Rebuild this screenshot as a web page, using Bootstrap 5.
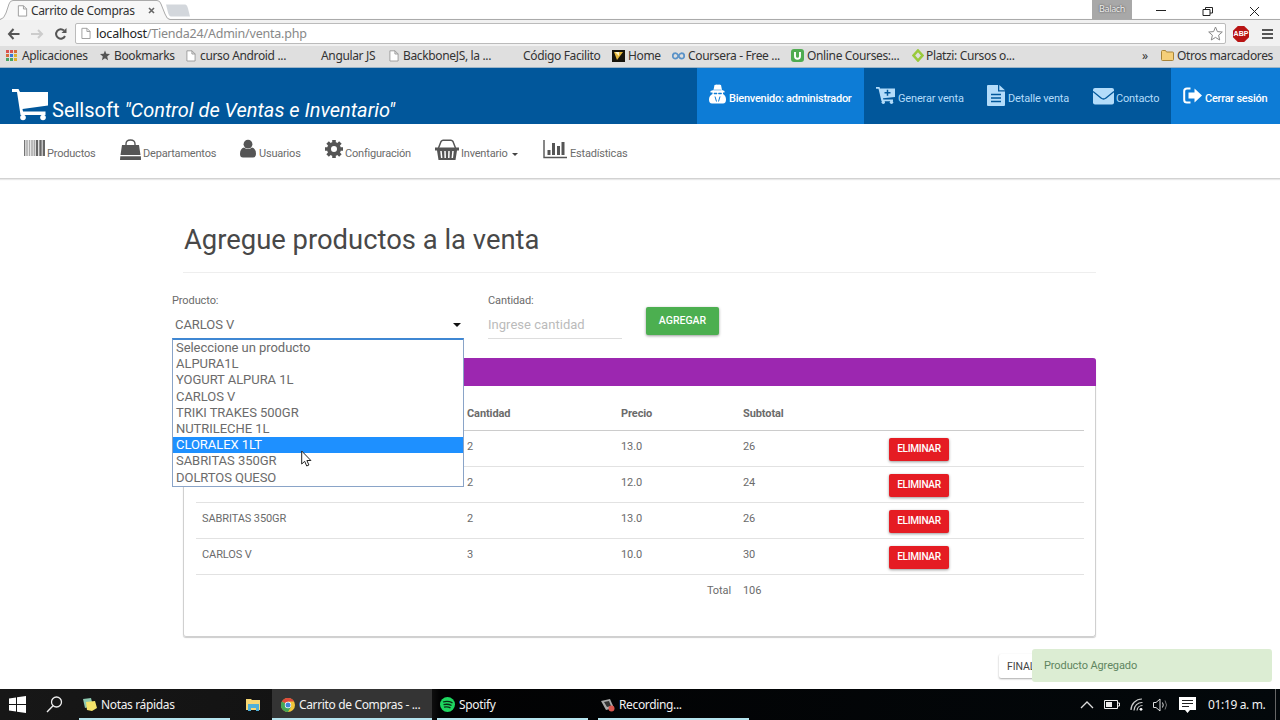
<!DOCTYPE html>
<html lang="es">
<head>
  <meta charset="UTF-8" />
  <meta name="viewport" content="width=device-width, initial-scale=1.0"/>
  <title>Carrito de Compras</title>
  <link href="https://cdn.jsdelivr.net/npm/bootstrap@5.3.3/dist/css/bootstrap.min.css" rel="stylesheet">
  <style>
    body { width: 1280px; height: 720px; overflow: hidden; font-family: Roboto, sans-serif; font-size: 11px; line-height: 16px; letter-spacing: -.1px; color: #6b6b6b; background: #fff; }
    svg { display: block; flex: none; }
    .sys { font-family: "Noto Sans", sans-serif; font-size: 12px; letter-spacing: -.35px; color: #333; white-space: nowrap; }

    /* browser */
    .tabs { height: 20px; background: linear-gradient(#fff 18px, #fcfcfc 18px); border-bottom: 1px solid #aaa; }
    .tab-shape { left: 0; top: 0; }
    .tab-label { width: 190px; padding-left: 17px; padding-top: 1px; height: 20px; }
    .user-tag { width: 40px; height: 19px; background: #a8a8a8; color: #eee; font-size: 9px; line-height: 18px; text-shadow: 0 0 2px #333; margin-right: 24px; }
    .addr-row { height: 26px; background: #f1f1f1; padding-left: 7px; }
    .addr { width: 1151px; height: 21px; border: 1px solid #bbb; border-radius: 2px; background: #fff; padding: 0 5px; font-size: 12.5px; letter-spacing: -.22px; color: #888; }
    .addr > span { padding: 2px 0 0 1px; }
    .addr b { font-weight: 400; color: #222; }
    .abp { width: 16px; height: 16px; background: #b81414; clip-path: polygon(30% 0,70% 0,100% 30%,100% 70%,70% 100%,30% 100%,0 70%,0 30%); color: #fff; font: bold 7px/16px "Liberation Sans", sans-serif; text-align: center; letter-spacing: 0; }
    .bookmarks { display: grid; grid-template-columns: 94px 86px 121px 82px 120px 103px 60px 119px 121px 230px 19px 1fr; height: 22px; background: #dfdfdf; padding-left: 6px; border-bottom: 1px solid #9cb4c8; }
    .bookmarks > div { display: flex; align-items: center; padding-bottom: 2px; }
    .slot { width: 16px; flex: none; }
    .slot.tight { width: 14px; }

    /* site header */
    .top-bar { height: 56px; background: #01579b; color: #fff; }
    .brand { font-size: 20px; line-height: 24px; letter-spacing: 0; padding-top: 21px; padding-left: 12px; }
    .top-link { display: flex; padding-left: 12px; height: 56px; color: #b3dcfa; letter-spacing: -.17px; }
    .top-link span { padding-top: 23px; white-space: nowrap; }
    .top-link.hot { background: #0d7cd6; color: #fff; font-weight: 500; letter-spacing: -.25px; }
    .w-user { width: 167px; }
    .w-new { width: 111px; }
    .w-detail { width: 106px; }
    .w-mail { width: 90px; }
    .w-exit { width: 109px; }
    .main-menu { display: grid; grid-template-columns: 96px 120px 85px 111px 107px 120px; height: 55px; border-bottom: 1px solid #d2d2d2; box-shadow: 0 1px 1px #e8e8e8; padding-left: 24px; }
    .main-menu a { display: flex; color: #6b6b6b; text-decoration: none; letter-spacing: -.2px; white-space: nowrap; }
    .main-menu a span { padding-top: 22px; }
    .main-menu svg { margin-top: 15px; color: #555; }
    .tri { border: 3px solid transparent; border-top-color: #444; border-bottom: 0; }

    /* sale form */
    .sale { width: 913px; margin-left: 183px; }
    .sale h1 { font-size: 27.4px; line-height: 34px; letter-spacing: 0; font-weight: 400; color: #484848; margin: 0; padding: 44px 0 15px 1px; border-bottom: 1px solid #eee; }
    .sale-form { height: 85px; margin-left: -11px; padding-top: 20px; }
    .field-text { height: 30px; font-size: 13px; padding: 8px 2px 0 3px; letter-spacing: -.05px; }
    .field-text .tri { border-width: 4px 4px 0; border-top-color: #111; height: 4px; margin-top: 6px; }
    .f-product { width: 291px; margin-right: 25px; }
    .f-amount { width: 134px; margin-right: 24px; }
    .f-amount .field-text { border-bottom: 1px solid #ddd; padding-left: 0; color: #bbb; letter-spacing: .03px; }
    .options { top: 45px; left: 0; width: 292px; height: 149px; z-index: 5; background: #fff; border: 1px solid #8aa4c8; border-top: 2px solid #3f87d3; font-size: 13px; line-height: 16.2px; letter-spacing: -.05px; }
    .options li { padding-left: 3px; height: 16.2px; }
    .options li.active { background: #1e90ff; color: #fff; }
    .pointer { left: 129px; top: 157px; z-index: 6; }
    .btn-flat { font-size: 10.5px; font-weight: 500; color: #fff; border: 0; border-radius: 2px; padding: 0; text-transform: uppercase; box-shadow: 0 1px 3px rgba(0,0,0,.4); }
    .btn-add { width: 73px; height: 28px; margin-top: 14px; background: #4caf50; }
    .btn-del { width: 60px; height: 23px; background: #e51c23; margin-top: 1px; font-size: 10.1px; letter-spacing: -.3px; display: block; }

    /* sale table */
    .sale-panel { height: 279px; border: 1px solid #d0d0d0; border-top: 0; border-radius: 3px; box-shadow: 0 1px 1px #ccc; }
    .panel-top { height: 28px; background: #9c27b0; margin: 0 -1px; border-radius: 3px 3px 0 0; }
    .items { width: 888px; margin: 11px 0 0 12px; table-layout: fixed; --bs-table-bg: transparent; }
    .items > :not(caption) > * > * { padding: 6px; height: 36px; border-color: #e2e2e2; color: #6b6b6b; vertical-align: top; }
    .items > thead > tr > th { height: 33px; padding: 9px 6px 0; border-bottom: 1px solid #ccc; font-weight: 700; line-height: 16px; }
    .items > tbody > tr > td { padding-top: 8.5px; padding-bottom: 0; }
    .items > tfoot > tr > td { border: 0; padding-top: 8.5px; }
    .items > tbody > tr > td.act { padding-top: 6px; }
    .finish { width: 90px; height: 24px; margin: 17px 0 0 999px; padding-left: 8px; line-height: 25px; font-size: 10.5px; color: #444; box-shadow: 0 1px 2px #aaa; border-radius: 2px; }
    .notice { left: 1032px; top: 649px; width: 240px; height: 33px; background: #dcedd3; border-radius: 3px; color: #5f8560; padding: 8.5px 12px; }

    /* taskbar */
    .task-bar { top: 689px; left: 0; width: 1280px; height: 31px; background: linear-gradient(90deg, #171717, #111 430px, #020203 440px, #03080b); padding-left: 9px; }
    .task-bar, .task-bar .sys { color: #f2f2f2; }
    .task { height: 31px; border-bottom: 2px solid #b5e4ee; padding: 2px 0 0 3px; }
    .task svg { margin-right: 4px; }
    .t-notes { width: 151px; margin-left: 16px; }
    .t-chrome { width: 160px; background: #343434; padding-left: 9px; margin-right: 5px; }
    .t-spotify { width: 151px; margin-right: 10px; }
    .t-rec { width: 151px; }
    .tray { width: 196px; gap: 10px; border-right: 1px solid #666; margin-right: 4px; }
  </style>
</head>
<body>

<!-- icon shapes used more than once -->
<svg width="0" height="0" class="position-absolute">
  <symbol id="page" viewBox="0 0 11 13"><path d="M1 .8h5.600L10 4.200V12H1z M6.500.8v3.500H10" fill="#fff" stroke="#999"/></symbol>
</svg>

<!-- Browser window -->
<div class="sys">
  <div class="tabs d-flex position-relative">
    <svg class="tab-shape position-absolute" width="192" height="20"><path d="M0 19.500Q4 19 6 13L9 4Q10 .5 13 .5H157Q160 .5 161 4L165 14Q167 19.500 170 19.500V20H0z" fill="#f7f7f7"/><path d="M0 19.500Q4 19 6 13L9 4Q10 .5 13 .5H157Q160 .5 161 4L165 14Q167 19.500 170 19.500" fill="none" stroke="#aaa"/><path d="M166 4.500h19q2 0 3 4l2 8h-19q-2 0-3-4z" fill="#d3d7dc"/></svg>
    <div class="tab-label d-flex align-items-center position-relative">
      <svg width="11" height="12" style="margin-right:3px"><use href="#page"/></svg>
      <span>Carrito de Compras</span>
      <svg width="7" height="7" class="ms-auto" style="margin-right:35px"><path d="M1 1l5 5M6 1L1 6" stroke="#666" stroke-width="1.600"/></svg>
    </div>
    <div class="user-tag ms-auto text-center">Balach</div>
    <svg width="124" height="20"><path d="M0 10.500h10M47 9.500h7v6h-7zM49.500 9V7.500h7V13H54M94 7l9 9M103 7l-9 9" fill="none" stroke="#222"/></svg>
  </div>
  <div class="addr-row d-flex align-items-center">
    <svg width="68" height="20"><path d="M12.500 11H2M6.500 6L2 11l4.500 5" fill="none" stroke="#555" stroke-width="2"/><path d="M24 11h11M31 7l4 4-4 4" fill="none" stroke="#ccc" stroke-width="2"/><path d="M57 7.500A4.700 4.700 0 1 0 58 13" fill="none" stroke="#555" stroke-width="2"/><path d="M59.500 5v5h-5z" fill="#555"/></svg>
    <div class="addr d-flex align-items-center">
      <svg width="10" height="13" class="me-1"><use href="#page"/></svg>
      <span><b>localhost</b>/Tienda24/Admin/venta.php</span>
      <svg width="15" height="15" class="ms-auto" style="margin-right:-3px"><path d="M7.500 1l1.900 4.600 4.900.4-3.700 3.200 1.100 4.800-4.200-2.600L3.300 14l1.100-4.800L.7 6l4.900-.4z" fill="none" stroke="#888"/></svg>
    </div>
    <div class="abp" style="margin:2px 0 0 7px">ABP</div>
    <svg width="11" height="12" style="margin:2px 0 0 13px"><path d="M0 2h11M0 6h11M0 10h11" stroke="#555" stroke-width="2"/></svg>
  </div>
  <div class="bookmarks">
    <div><span class="slot"><svg width="11" height="11"><path d="M0 1.500h3M4 1.500h3" stroke="#d9534f" stroke-width="3"/><path d="M8 1.500h3M0 5.500h3" stroke="#d66b3a" stroke-width="3"/><path d="M4 5.500h3" stroke="#3b78d8" stroke-width="3"/><path d="M8 5.500h3M8 9.500h3" stroke="#e0b030" stroke-width="3"/><path d="M0 9.500h3M4 9.500h3" stroke="#4aa564" stroke-width="3"/><path d="M3.500 0v11M7.500 0v11M0 3.500h11M0 7.500h11" stroke="#dfdfdf"/></svg></span>Aplicaciones</div>
    <div><span class="slot tight"><svg width="10" height="11"><path d="M5 .5l1.300 3.300 3.700.3L7.200 6.500l.9 3.700L5 8.200l-3.100 2 .9-3.700L0 4.100l3.700-.3z" fill="#555"/></svg></span>Bookmarks</div>
    <div><span class="slot tight"><svg width="10" height="12"><use href="#page"/></svg></span>curso Android ...</div>
    <div><span class="slot tight"></span>Angular JS</div>
    <div><span class="slot tight"><svg width="10" height="12"><use href="#page"/></svg></span>BackboneJS, la ...</div>
    <div><span class="slot tight"></span>Código Facilito</div>
    <div><span class="slot"><svg width="13" height="12"><path d="M0 0h13v12H0z" fill="#16140c"/><path d="M2 2h9L5 10z" fill="#e6b93c"/><path d="M3 2h4v4z" fill="#fff3c4"/></svg></span>Home</div>
    <div><span class="slot"><svg width="13" height="8"><path d="M6.500 4Q5 1.200 3.500 1.200a2.700 2.700 0 0 0 0 5.500Q5 6.700 6.500 4t3-2.800a2.700 2.700 0 0 1 0 5.500Q8 6.700 6.500 4z" fill="none" stroke="#5b93c8" stroke-width="1.800"/></svg></span>Coursera - Free ...</div>
    <div><span class="slot"><svg width="13" height="13"><rect width="13" height="13" rx="3" fill="#4fab50"/><path d="M4 3v4.200a2.500 2.500 0 0 0 5 0V3" fill="none" stroke="#fff" stroke-width="1.900"/></svg></span>Online Courses:...</div>
    <div><span class="slot tight"><svg width="12" height="13"><path d="M6 1.500L10.500 6.500 6 11.500 1.500 6.500z" fill="none" stroke="#9aca3c" stroke-width="2.600"/></svg></span>Platzi: Cursos o...</div>
    <div>»</div>
    <div><span class="slot"><svg width="13" height="11"><path d="M.5 1.500q0-1 1-1h3l1 1.500h6q1 0 1 1v6.500q0 1-1 1h-10q-1 0-1-1z" fill="#f5cf79" stroke="#a88438"/></svg></span>Otros marcadores</div>
  </div>
</div>

<!-- Site header -->
<div class="top-bar d-flex">
  <div class="brand d-flex me-auto">
    <svg width="37" height="32"><path d="M0 0h6.500L8 3h28v13.500L10.500 20l.5 2.500h22.500V26H8.500L5 3H0z" fill="#fff"/><circle cx="11" cy="28.500" r="2.800" fill="#fff"/><circle cx="31" cy="28.500" r="2.800" fill="#fff"/></svg>
    <div style="padding:9px 0 0 3px">Sellsoft <em>"Control de Ventas e Inventario"</em></div>
  </div>
  <div class="top-link hot w-user">
    <svg width="20" height="36" viewBox="0 -16 20 36"><path d="M4.500 6L5.500 1Q8 0 9 .8 10 0 12 1l1 5 2.500 1v1.500H14V10q3 1.500 3 5.500 0 4-3 4H3q-3 0-3-4Q0 11.500 3.500 10V8.500H1.500V7z" fill="#fff"/><path d="M4.500 6h8M5 9h3v1H5zM9.500 9h3v1h-3z" stroke="#0d7cd6" fill="#0d7cd6" stroke-width=".5"/><path d="M6 12.500l1.500 5M11 12.500l-1.500 5" stroke="#0d7cd6"/></svg>
    <span>Bienvenido: administrador</span>
  </div>
  <div class="top-link w-new">
    <svg width="22" height="36" viewBox="0 -18 22 36"><path d="M0 1h3.500l.5 1.500h15V11L7 12.300l.3 1.200H17v1.800H5.500L2.500 2.800H0z" fill="currentColor"/><circle cx="7.300" cy="16.300" r="1.700" fill="currentColor"/><circle cx="15.500" cy="16.300" r="1.700" fill="currentColor"/><path d="M11.500 3.800v6M8.500 6.800h6" stroke="#01579b" stroke-width="1.500"/></svg>
    <span>Generar venta</span>
  </div>
  <div class="top-link w-detail">
    <svg width="21" height="39" viewBox="0 -17 21 39"><path d="M1 0h10v6.500h7V20q0 1-1 1H1q-1 0-1-1V1q0-1 1-1zM12.300 0L18 5.300h-5.700z" fill="currentColor"/><path d="M4 9.500h10M4 13h10M4 16.500h10" stroke="#01579b" stroke-width="1.400"/></svg>
    <span>Detalle venta</span>
  </div>
  <div class="top-link w-mail">
    <svg width="23" height="37" viewBox="0 -19 23 37"><rect x="0" y="1" width="21" height="16.500" rx="2" fill="currentColor"/><path d="M0 4.500l8 6.500q2.500 2 5 0l8-6.500" fill="none" stroke="#01579b" stroke-width="1.300"/></svg>
    <span>Contacto</span>
  </div>
  <div class="top-link hot w-exit">
    <svg width="22" height="37" viewBox="0 -19 22 37"><path d="M7.500 1.500H4Q1.200 1.500 1.200 4v9q0 2.500 2.800 2.500h3.500" fill="none" stroke="#fff" stroke-width="2"/><path d="M5.500 5.500h6V1.500l7.500 7-7.500 7v-4h-6z" fill="#fff"/></svg>
    <span>Cerrar sesión</span>
  </div>
</div>

<!-- Admin menu -->
<div class="main-menu">
  <a href="#"><svg width="23" height="18"><path d="M3 1v16M5.500 1v16M8 1v16M10.300 1v16" stroke="#aaa" stroke-width="1.600"/><path d="M.7 1v16" stroke="#666" stroke-width="1.200"/><path d="M13 1v16M16.500 1v16M19.800 1v16" stroke="#666" stroke-width="2.400"/></svg><span>Productos</span></a>
  <a href="#"><svg width="23" height="22"><path d="M2 6h17l1.500 10H.5zM.3 17.200h20.600L21 21H0z" fill="currentColor"/><path d="M6 9V5q0-4 4.500-4T15 5v4" fill="none" stroke="currentColor" stroke-width="1.400"/></svg><span>Departamentos</span></a>
  <a href="#"><svg width="19" height="19"><circle cx="8" cy="5.200" r="4.400" fill="currentColor"/><path d="M4 8.500Q8 11.500 12 8.500q4 1 4 6.500 0 3.500-3 3.500H3q-3 0-3-3.500Q0 9.500 4 8.500z" fill="currentColor"/></svg><span>Usuarios</span></a>
  <a href="#"><svg width="20" height="19" viewBox="0 -1 20 19"><circle cx="9" cy="9" r="5" fill="none" stroke="currentColor" stroke-width="4"/><path d="M9 0v4M9 14v4M0 9h4M14 9h4M2.600 2.600l3 3M12.400 12.400l3 3M2.600 15.400l3-3M12.400 5.600l3-3" stroke="currentColor" stroke-width="3.600"/></svg><span>Configuración</span></a>
  <a href="#"><svg width="26" height="22" style="margin-left:-1px"><path d="M0 8.500h24v3h-2L20.500 21h-17L2 11.500H0z" fill="currentColor"/><path d="M3.500 9L6 2.500Q7 1.200 8 1.200h8q1 0 2 1.300L20.500 9M9 1.200h6" fill="none" stroke="currentColor" stroke-width="1.500"/><path d="M6 12l.7 7M10 12l.2 7M14 12l-.2 7M18 12l-.7 7" stroke="#fff" stroke-width="1.500"/></svg><span>Inventario <i class="tri d-inline-block align-middle" style="margin-left:2px"></i></span></a>
  <a href="#"><svg width="27" height="20"><path d="M1 1v17.500h23" fill="none" stroke="currentColor" stroke-width="1.400"/><path d="M6 11v5M10.500 4v12M15.500 7v9M20 3v13" stroke="currentColor" stroke-width="3"/></svg><span>Estadísticas</span></a>
</div>

<!-- Sale form -->
<div class="sale">
  <h1>Agregue productos a la venta</h1>
  <div class="sale-form d-flex">
    <div class="f-product position-relative">
      <div>Producto:</div>
      <div class="field-text d-flex justify-content-between">CARLOS V <i class="tri"></i></div>
      <ul class="options list-unstyled position-absolute m-0">
        <li>Seleccione un producto</li>
        <li>ALPURA1L</li>
        <li>YOGURT ALPURA 1L</li>
        <li>CARLOS V</li>
        <li>TRIKI TRAKES 500GR</li>
        <li>NUTRILECHE 1L</li>
        <li class="active">CLORALEX 1LT</li>
        <li>SABRITAS 350GR</li>
        <li>DOLRTOS QUESO</li>
      </ul>
      <svg class="pointer position-absolute" width="12" height="18"><path d="M.7 1v13l3-2.700 2 4.700 2.200-1-2-4.500h4z" fill="#fff" stroke="#222"/></svg>
    </div>
    <div class="f-amount">
      <div>Cantidad:</div>
      <div class="field-text">Ingrese cantidad</div>
    </div>
    <button class="btn btn-flat btn-add">Agregar</button>
  </div>

  <div class="sale-panel">
    <div class="panel-top"></div>
    <table class="table items mb-0">
      <colgroup><col width="265"><col width="154"><col width="122"><col width="146"><col width="201"></colgroup>
      <thead>
        <tr><th></th><th>Cantidad</th><th>Precio</th><th>Subtotal</th><th></th></tr>
      </thead>
      <tbody>
        <tr><td></td><td>2</td><td>13.0</td><td>26</td><td class="act"><button class="btn btn-flat btn-del">Eliminar</button></td></tr>
        <tr><td></td><td>2</td><td>12.0</td><td>24</td><td class="act"><button class="btn btn-flat btn-del">Eliminar</button></td></tr>
        <tr><td>SABRITAS 350GR</td><td>2</td><td>13.0</td><td>26</td><td class="act"><button class="btn btn-flat btn-del">Eliminar</button></td></tr>
        <tr><td>CARLOS V</td><td>3</td><td>10.0</td><td>30</td><td class="act"><button class="btn btn-flat btn-del">Eliminar</button></td></tr>
      </tbody>
      <tfoot>
        <tr><td></td><td></td><td class="text-end">Total</td><td>106</td><td></td></tr>
      </tfoot>
    </table>
  </div>
</div>
<div class="finish">FINAL</div>
<div class="notice position-absolute">Producto Agregado</div>

<!-- Taskbar -->
<div class="task-bar sys position-absolute d-flex align-items-center">
  <svg width="17" height="17"><path d="M0 2.500l7-1V8H0zM8 1.300L17 0v8H8zM0 9h7v6.500l-7-1zM8 9h9v8l-9-1.300z" fill="#fff"/></svg>
  <svg width="17" height="17" style="margin-left:20px"><circle cx="10.500" cy="6" r="5" fill="none" stroke="#eee" stroke-width="1.300"/><path d="M7 9.700L1 16" stroke="#eee" stroke-width="1.400"/></svg>
  <div class="task t-notes d-flex align-items-center">
    <svg width="15" height="13"><path d="M1 1l8-1 2 8-8 2z" fill="#8ec9b0"/><path d="M4 4l9-1 2 7-5 3-5-1z" fill="#f4e36a"/></svg>Notas rápidas
  </div>
  <svg width="14" height="13" style="margin:0 12px 0 16px"><path d="M0 1h5l1 1h8v10H0z" fill="#f7d774"/><path d="M2 6h11v7h-3v-3H5v3H2z" fill="#4fb0d8"/></svg>
  <div class="task t-chrome d-flex align-items-center">
    <svg width="14" height="14"><circle cx="7" cy="7" r="7" fill="#f2c53a"/><path d="M7 7L.9 3.500A7 7 0 0 1 13.100 3.500H7z" fill="#df4a3c"/><path d="M7 7L.9 3.500A7 7 0 0 0 7 14l3-5z" fill="#45a756"/><circle cx="7" cy="7" r="3.200" fill="#fff"/><circle cx="7" cy="7" r="2.500" fill="#4285d6"/></svg>Carrito de Compras - ...
  </div>
  <div class="task t-spotify d-flex align-items-center">
    <svg width="15" height="15"><circle cx="7.500" cy="7.500" r="7.500" fill="#1ed760"/><path d="M3 5q5-1.500 9.500.8M3.500 7.700q4.500-1.200 8 .8M4 10.200q3.500-1 6.500.7" fill="none" stroke="#0b2c15" stroke-width="1.300"/></svg>Spotify
  </div>
  <div class="task t-rec d-flex align-items-center">
    <svg width="14" height="14"><path d="M0 3l9-2 4 9-8 2z" fill="#aaa"/><path d="M3 4l5-1 2 5-4 1z" fill="#333"/><circle cx="10.500" cy="10.500" r="3" fill="#d9574f"/></svg>Recording...
  </div>
  <div class="tray d-flex align-items-center ms-auto h-100">
    <svg width="14" height="9"><path d="M1 8l6-6 6 6" fill="none" stroke="#ddd" stroke-width="1.300"/></svg>
    <svg width="16" height="10"><path d="M.5.500h13v8H.500zM14 3h1.500v3H14" fill="none" stroke="#eee"/><path d="M2 2h6v5H2z" fill="#eee"/></svg>
    <svg width="13" height="13"><path d="M1 12A11 11 0 0 1 12 1M4 12.500A8 8 0 0 1 12.500 4.500M7 12.500A5.500 5.500 0 0 1 12.500 7.500" fill="none" stroke="#ccc" stroke-width="1.200"/><circle cx="11" cy="11.300" r="1.400" fill="#fff"/></svg>
    <svg width="16" height="14"><path d="M.5 4.500H3l4-3.500v12L3 9.500H.500z" fill="none" stroke="#ddd"/><path d="M9.500 4.500q1.500 2.500 0 5" fill="none" stroke="#ddd"/><path d="M12 2.500q3 4.500 0 9" fill="none" stroke="#777"/></svg>
    <svg width="17" height="16"><path d="M0 0h17v13h-6l-2.500 3L6 13H0z" fill="#fff"/><path d="M3 3.500h11M3 6.500h11M3 9.500h7" stroke="#222"/></svg>
    <span style="margin-left:2px">01:19 a. m.</span>
  </div>
</div>

<script src="https://cdn.jsdelivr.net/npm/bootstrap@5.3.3/dist/js/bootstrap.bundle.min.js"></script>
</body>
</html>
